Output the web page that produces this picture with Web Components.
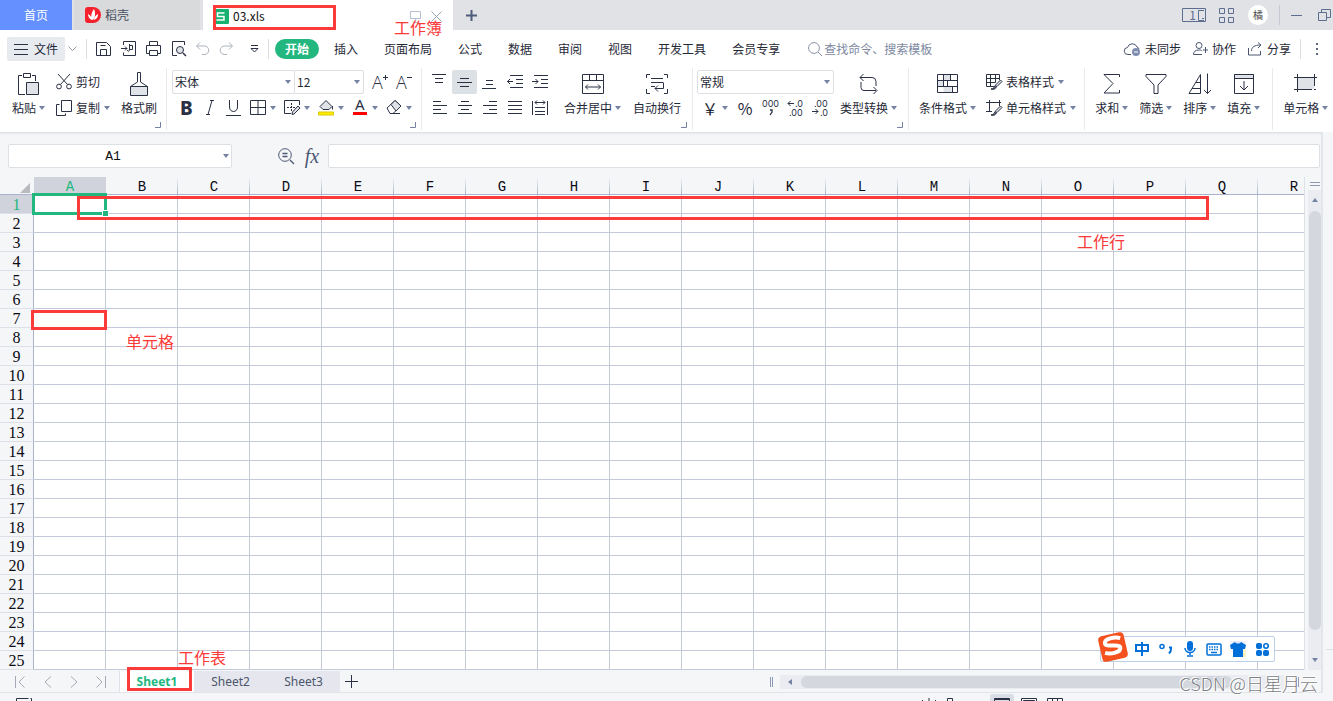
<!DOCTYPE html>
<html lang="zh-CN">
<head>
<meta charset="utf-8">
<title>03.xls</title>
<style>
html, body { margin: 0; height: 100%; }
body {
  font: 12px/18px "Noto Sans CJK SC", sans-serif;
  color: #1f2937;
  background: #f5f6f8;
  overflow: hidden;
  --line: #c5cadb;
  --edge: #a9b3cc;
  --green: #22b77f;
  --ink: #2a3144;
  --soft: #7583a3;
  --mark: #fb3a3a;
}
</style>
</head>
<body>
<wps-app></wps-app>
<script>
const ICONS = {
  docer: [16, 16, '<path d="M3 0h5a8 8 0 0 1 0 16H3a3 3 0 0 1-3-3V3a3 3 0 0 1 3-3z" fill="#f5222d" stroke="none"/><path d="M8 13C5 12 6 6 9 2c2 4 1 9-1 11zM7 13C4 12 3 9 3 7c2 1 4 3 4 6zM9 13c3-1 4-3 4-6-2 1-4 3-4 6z" fill="#fff" stroke="none"/>'],
  sheet: [14, 15, '<rect width="14" height="15" rx="1" fill="#17b26f" stroke="none"/><path d="M9.500 4H2.500v3.500H9V11H1.500" stroke="#fff" stroke-width="1.500"/>'],
  monitor: [12, 13, '<path d="M.5 1.500h10v7H.5zM5.500 9v3M3 12.500h5" stroke="#b7bfcf"/>'],
  close: [11, 11, '<path d="M.5.5l10 10M10.500.5l-10 10" stroke="#98a3b8"/>'],
  plusBold: [13, 13, '<path d="M6.500 1v11M1 6.500h11" stroke="#4f5b7a" stroke-width="2"/>'],
  reader: [25, 15, '<path d="M.5.5h23v13H.5zM22 2.500h-5.500v10H22" stroke="#5d6d90"/><path d="M20 10.500h2" stroke="#5d6d90"/>'],
  apps: [15, 15, '<path d="M.5.5h5v5h-5zM9.500.5h5v5h-5zM.5 9.500h5v5h-5zM9.500 9.500h5v5h-5z" stroke="#5d6d90"/>'],
  minimize: [11, 11, '<path d="M0 5.500h11" stroke="#5d6d90"/>'],
  restore: [13, 13, '<path d="M.5 3.500h8v8h-8zM3.500 3V.5h9v8H9" stroke="#5d6d90"/>'],
  menu: [14, 12, '<path d="M0 1.500h14M0 6.500h14M0 11.500h14"/>'],
  chevron: [9, 6, '<path d="M.5.5l4 4 4-4" stroke="#98a0ae"/>'],
  save: [16, 16, '<path d="M.5 14.500v-13h10l4 4v9H.5zM4.500 14.500v-6h6v6M4.500 4.500h5"/>'],
  exportPdf: [16, 16, '<path d="M2.500 4V.5h12v14h-12v-3M0 7.500h6M4 5.500l2 2-2 2M8.500 4.500h3v4H8M8.500 3v5c0 3-2 3-2 1"/>'],
  print: [16, 16, '<path d="M3.500 4V.5h8V4M3 12.500H.5v-8h14v8H12M3.500 9.500h8v5h-8z"/>'],
  preview: [16, 16, '<path d="M6 14.500H1.500V.5h12V4"/><circle cx="9" cy="9" r="3.500" fill="#dfe3e8"/><path d="M12 12l3 3" stroke-width="1.500"/>'],
  undo: [14, 14, '<path d="M4 .5L.5 4 4 7.500M1 4h7.500a4.200 4.200 0 0 1 0 8.500H6" stroke="#aab0ba"/>'],
  redo: [14, 14, '<path d="M10 .5L13.500 4 10 7.500M13 4H5.500a4.200 4.200 0 0 0 0 8.500H8" stroke="#aab0ba"/>'],
  more: [9, 8, '<path d="M1 .5h7M1 3.500h7L4.500 7z"/>'],
  search: [15, 15, '<circle cx="6" cy="6" r="5.400" stroke="#8a95ad"/><path d="M10 10l4 4" stroke="#8a95ad"/>'],
  cloud: [17, 14, '<path d="M7 12.500H4a3.500 3.500 0 0 1-.5-7 5 5 0 0 1 9.500-.5 3 3 0 0 1 2 2" stroke="#4a5670"/><circle cx="12" cy="10" r="4" fill="#7f8eb0" stroke="none"/><path d="M10 10h4" stroke="#fff"/>'],
  people: [15, 14, '<circle cx="6" cy="3.500" r="3" stroke="#4a5670"/><path d="M9 12.500H.5c0-3 2-4.500 5.500-4.500 2 0 3 .5 3 1M12.500 5v6M10 8h5" stroke="#4a5670"/>'],
  share: [15, 14, '<path d="M.5 6v7h12V9M3.500 9c0-4 3-6 9-6M10 .5L13 3l-3 3" stroke="#4a5670"/>'],
  paste: [22, 23, '<path d="M7 21.500H.5v-19H4M14 2.500h3.500V8M5.500.5h7v4h-7z"/><path d="M8.500 9.500h12v12h-12z" fill="#dfe3e8"/>'],
  cut: [16, 16, '<circle cx="3" cy="12.500" r="2.400"/><circle cx="13" cy="12.500" r="2.400"/><path d="M2 0l9.500 10.500M14 0L4.500 10.500"/>'],
  copy: [16, 16, '<path d="M5.500.5h10v11h-10zM3.500 4.500h-3v11h9v-2"/>'],
  brush: [20, 24, '<path d="M8.500 10V.5h3V10l7 4.500H1.500z"/><path d="M1.500 14.500h17v9h-17z" fill="#dfe3e8"/>'],
  bold: [16, 18, '<text x="2" y="16" font-family="Noto Sans, sans-serif" font-size="19" font-weight="800">B</text>'],
  italic: [16, 16, '<path d="M8 .5h4M4 14.500h4M10 .5l-4 14"/>'],
  underline: [16, 16, '<path d="M3.500 0v7c0 6 8 6 8 0V0M0 15.500h15"/>'],
  borders: [16, 16, '<path d="M.5.5h15v14H.5zM8 .5v14M.5 7.500h15"/>'],
  drawBorder: [16, 16, '<path d="M7 13.500H.5V.5h15V5"/><path d="M7.500 3v9M3 7.500h9" stroke-dasharray="2 1"/><path d="M14 6l2 2-6 6-2 .5.5-2.500z" fill="#dfe3e8"/>'],
  fill: [16, 16, '<path d="M2 6.500l6-6 6 6-3 3H5z" fill="#dfe3e8"/><path d="M14.500 6v3.500"/><path d="M.5 12h15v3H.5z" fill="#ffee00" stroke="#d7c800"/>'],
  fontColor: [16, 16, '<text x="3" y="10" font-family="Noto Sans, sans-serif" font-size="15">A</text><path d="M1 12h14v3H1z" fill="#ff0000" stroke="none"/>'],
  eraser: [16, 16, '<path d="M1 8l8-7.500L15 6l-8 7.500H4z"/><path d="M5 4.500L9 .5 15 6l-5 5z" fill="#dfe3e8"/><path d="M7 13.500h7"/>'],
  grow: [16, 17, '<text x="0" y="15" font-family="Open Sans, sans-serif" font-size="18" font-weight="300">A</text><path d="M13.500 1v5M11 3.500h5"/>'],
  shrink: [16, 17, '<text x="0" y="15" font-family="Open Sans, sans-serif" font-size="18" font-weight="300">A</text><path d="M11 3.500h5"/>'],
  top: [15, 16, '<path d="M0 .5h14M3 4.500h8M3 8.500h8"/>'],
  middle: [15, 16, '<path d="M3 4.500h9M0 8.500h15M3 12.500h9"/>'],
  bottom: [15, 16, '<path d="M4 6.500h7M4 10.500h7M0 14.500h14"/>'],
  outdent: [16, 16, '<path d="M3 1.500h13M9 5.500h7M9 9.500h7M3 13.500h13M0 7.500h6M3 5L.5 7.500 3 10"/>'],
  indent: [16, 16, '<path d="M2 1.500h14M9 5.500h7M9 9.500h7M2 13.500h14M0 7.500h6M3.500 5L6 7.500 3.500 10"/>'],
  left: [14, 14, '<path d="M0 .5h8M0 4.500h14M0 8.500h8M0 12.500h14"/>'],
  center: [14, 14, '<path d="M3 .5h8M0 4.500h14M3 8.500h8M0 12.500h14"/>'],
  right: [14, 14, '<path d="M6 .5h8M0 4.500h14M6 8.500h8M0 12.500h14"/>'],
  justify: [14, 14, '<path d="M0 .5h14M0 4.500h14M0 8.500h14M0 12.500h14"/>'],
  spread: [16, 16, '<path d="M.5 1v14M15.500 1v14M3 2.500h10M5 .5l-2 2 2 2M11 .5l2 2-2 2M3 7.500h10M3 11.500h10M3 14.500h10"/>'],
  merge: [22, 20, '<path d="M.5.5h21v19H.5zM.5 6.500h21M7.500.5v6M14.500.5v6M3.500 13h15M6 10.500L3.500 13 6 15.500M16 10.500l2.500 2.500-2.500 2.500"/>'],
  wrap: [22, 20, '<path d="M4 .5H.5V4M18 .5h3.500V4M.5 15v4.500H4M21.500 15v4.500H18M5 4.500h12M5 8.500h12M5 12.500h4M17.500 8.500v6H9M12 11.500l-3 3 3 3"/>'],
  comma: [16, 16, '<text x="0" y="7" font-family="Inter, sans-serif" font-size="9">000</text><path d="M8 10h2v2l-2 3" fill="none" stroke-width="1.300"/>'],
  decAdd: [16, 16, '<path d="M1 3.500h6M3.500 1L1 3.500 3.500 6"/><text x="8" y="7" font-family="Inter, sans-serif" font-size="9">.0</text><text x="2" y="16" font-family="Inter, sans-serif" font-size="9">.00</text>'],
  decSub: [16, 16, '<path d="M0 11.500h6M3.500 9L6 11.500 3.500 14"/><text x="2" y="7" font-family="Inter, sans-serif" font-size="9">.00</text><text x="8" y="16" font-family="Inter, sans-serif" font-size="9">.0</text>'],
  convert: [20, 21, '<path d="M4.500 0L1 3.500 4.500 7M1 3.500h12a4 4 0 0 1 4 4V12M2 8v5.500a3 3 0 0 0 3 3h12M14.500 13l3.500 3.500-3.500 3.500"/>'],
  condition: [22, 20, '<path d="M6.500.5h7v6h-7zM.5 6.500h6v6h-6zM6.500 12.500h8v6h-8z" fill="#dfe3e8" stroke="none"/><path d="M.5.5h20v18H.5zM.5 6.500h20M.5 12.500h20M6.500.5v12M13.500.5v6M10.500 6.500v6M15.500 12.500v6"/>'],
  tableStyle: [16, 17, '<path d="M8 12.500H.5V.5h13V6M.5 4.500h13M.5 8.500h9M4.500.5v12M9.500.5v8"/><path d="M14.500 6l1.500 1.500-5 5-2-1z" fill="#dfe3e8"/><path d="M9 12c-1 2-2 2.500-4 3 2 1 5 0 5.500-2.500" fill="#59627a"/>'],
  cellStyle: [16, 17, '<path d="M3.500 0v12M0 2.500h15M0 11.500h6M13.500 0v6"/><path d="M14.500 6l1.500 1.500-5 5-2-1z" fill="#dfe3e8"/><path d="M9 12c-1 2-2 2.500-4 3 2 1 5 0 5.500-2.500" fill="#59627a"/>'],
  sum: [18, 22, '<path d="M16.500 4V1.500H1l9 9-9 9.500h15.500V17"/>'],
  filter: [22, 22, '<path d="M1 1.500h20v2l-8 8.500v8.500H9V12L1 3.500z"/>'],
  sort: [24, 22, '<path d="M1 20.500L12.500 1.500v19zM8 9.500h4M4 15.500h8M19.500.5v20M16 17l3.500 3.500L23 17"/>'],
  fillDown: [22, 22, '<path d="M1.500 1.500h19v4h-19z" fill="#dfe3e8"/><path d="M1.500 1.500h19v19h-19zM11 8v9M7 13l4 4 4-4"/>'],
  cell: [24, 20, '<path d="M4 4h16v11H4z" fill="#dfe3e8" stroke="none"/><path d="M3.500 0v18M20.500 0v12M0 3.500h23M0 15.500h18M20 15.500h2"/>'],
  zoomOut: [17, 17, '<circle cx="7" cy="7" r="6.300" stroke="#4b5873"/><path d="M12 12l4 4M4.500 5.500h5M4.500 8.500h5" stroke="#4b5873" stroke-width="1.300"/>'],
  first: [11, 12, '<path d="M.5 0v12M9.500.5L4 6l5.500 5.500" stroke="#a4a9b3"/>'],
  prev: [8, 12, '<path d="M7 .5L1 6l6 5.500" stroke="#a4a9b3"/>'],
  next: [8, 12, '<path d="M1 .5L7 6l-6 5.500" stroke="#a4a9b3"/>'],
  last: [11, 12, '<path d="M9.500 0v12M.5.5L6 6 .5 11.500" stroke="#a4a9b3"/>'],
  plus: [13, 13, '<path d="M6.500 0v13M0 6.500h13"/>'],
  arrow: [6, 4, '<path d="M0 0h6L3 4z" fill="#7583a3" stroke="none"/>'],
  up: [6, 4, '<path d="M0 4h6L3 0z" fill="#7583a3" stroke="none"/>'],
  leftArrow: [4, 6, '<path d="M4 0v6L0 3z" fill="#7583a3" stroke="none"/>'],
  rightArrow: [4, 6, '<path d="M0 0v6l4-3z" fill="#7583a3" stroke="none"/>'],
  launcher: [6, 6, '<path d="M5.500 0v5.500H0" stroke="#7583a3"/>'],
  sogou: [34, 34, '<g transform="rotate(-13 17 17)"><rect x="4" y="4" width="26" height="26" rx="4" fill="#f4511e" stroke="none"/><path d="M26 10c-5-3-16-3-16 2 0 4 14 3 14 7 0 5-11 5-16 2" stroke="#fff" stroke-width="4"/></g>'],
  zh: [16, 16, '<path d="M2 4h12v6H2zM8 1v14" stroke="#0070d8" stroke-width="2"/>'],
  punct: [16, 16, '<circle cx="4" cy="5.500" r="2" stroke="#0070d8" stroke-width="1.500"/><path d="M11 6.500h2v2c0 2-1 3-2 4" stroke="#0070d8" stroke-width="2"/>'],
  mic: [16, 16, '<rect x="5" y="0" width="6" height="10" rx="3" fill="#0070d8" stroke="none"/><path d="M3 7c0 6 10 6 10 0M8 11v3M5 15h6" stroke="#0070d8" stroke-width="1.500"/>'],
  keyboard: [16, 16, '<rect x="1" y="3" width="14" height="11" rx="1" stroke="#0070d8" stroke-width="1.500"/><path d="M3 6h10M3 8.500h10" stroke="#0070d8" stroke-width="1.500" stroke-dasharray="1.500 1"/><path d="M5 11.500h6" stroke="#0070d8" stroke-width="1.500"/>'],
  skin: [16, 16, '<path d="M5 1c1 2 5 2 6 0l5 3-1 4h-2v8H3V8H1L0 4z" fill="#0070d8" stroke="none"/>'],
  tools: [16, 16, '<g fill="#0070d8" stroke="none"><rect x="2" y="2" width="6" height="6" rx="2"/><rect x="2" y="9" width="6" height="6" rx="2"/><rect x="9" y="9" width="6" height="6" rx="2"/></g><circle cx="12" cy="5" r="2.200" stroke="#0070d8" stroke-width="1.600"/>'],
  record: [16, 12, '<path d="M.5 12V.5h12M14.500.5h1v3" />'],
  eye: [16, 12, '<path d="M8 0v3M1 2l2 2M15 2l-2 2M0 8c5-5 11-5 16 0"/>'],
  lock: [6, 12, '<path d="M.5 12V.5h5V12"/>'],
  viewNormal: [16, 12, '<path d="M.5.5h15v11H.5zM0 1.500h16"/>'],
  viewPage: [16, 12, '<path d="M.5.5h15v11H.5zM2.500 2.500h11v9h-11z"/>'],
  viewBreak: [16, 12, '<path d="M.5.5h15v11H.5zM5.500.5v11M10.500.5v11"/>']
};

const BASE = `
:host { box-sizing: border-box; }
:host([hidden]) { display: none; }
*, *::before, *::after { box-sizing: border-box; }
button, input, select { font: inherit; color: inherit; margin: 0; padding: 0; border: 0; background: none; border-radius: 0; outline: 0; }
button { display: flex; align-items: center; justify-content: center; white-space: nowrap; }
a { color: inherit; text-decoration: none; }
`;

function element(name, css, html) {
  customElements.define(name, class extends HTMLElement {
    constructor() {
      super();
      const root = this.attachShadow({ mode: "open" });
      root.innerHTML = `<style>${BASE}${css}</style>${typeof html === "function" ? html(this) : html}`;
    }
  });
}

customElements.define("wps-icon", class extends HTMLElement {
  static observedAttributes = ["name"];
  constructor() {
    super();
    this.attachShadow({ mode: "open" });
  }
  attributeChangedCallback() {
    const [w, h, art] = ICONS[this.getAttribute("name")];
    this.shadowRoot.innerHTML = `<style>:host{display:block;flex:none}svg{display:block;overflow:visible;fill:none;stroke:var(--ink)}text{fill:var(--ink);stroke:none}</style>
      <svg width="${w}" height="${h}" viewBox="0 0 ${w} ${h}" aria-hidden="true">${art}</svg>`;
  }
});

const icon = name => `<wps-icon name="${name}"></wps-icon>`;

/* Command with a large icon over its caption. */
element("wps-big-command", `
:host { display: block; flex: none; }
button { flex-direction: column; height: 48px; }
.art { display: flex; align-items: center; justify-content: center; height: 28px; }
.label { display: flex; align-items: center; gap: 3px; height: 20px; }
:host([plain]) .label wps-icon { display: none; }`,
`<button type="button"><span class="art"><slot name="icon"></slot></span><span class="label"><slot></slot>${icon("arrow")}</span></button>`);

/* Small command: icon, optional caption, optional menu arrow. */
element("wps-command", `
:host { display: block; flex: none; }
button { height: 24px; gap: 4px; min-width: 16px; }
.art { display: flex; justify-content: center; min-width: 16px; }
:host([cell]) button { width: 25px; }
:host([active]) button { background: #dce1e6; border-radius: 2px; }
.arrow { display: none; }
:host([menu]) .arrow { display: block; }`,
`<button type="button"><span class="art"><slot name="icon"></slot></span><slot></slot><wps-icon class="arrow" name="arrow"></wps-icon></button>`);

/* Bordered drop-down list. */
element("wps-select", `
:host { display: block; position: relative; height: 24px; }
select { appearance: none; width: 100%; height: 24px; padding: 0 16px 0 2px; border: 1px solid #dcdfe4; border-radius: 2px; background: #fff; }
wps-icon { position: absolute; right: 4px; top: 10px; pointer-events: none; }`,
el => `<select aria-label="${el.getAttribute("label")}"><option>${el.getAttribute("value")}</option></select>${icon("arrow")}`);

element("wps-group", `
:host { display: flex; position: relative; flex: none; gap: 12px; height: 62px; padding: 2px 11px 0 10px; border-right: 1px solid #e8eaee; }
.launch { position: absolute; right: 5px; bottom: 2px; display: none; }
:host([launcher]) .launch { display: block; }
:host([last]) { border-right: 0; padding-right: 0; }`,
`<slot></slot><button class="launch" type="button" aria-label="更多设置">${icon("launcher")}</button>`);

element("wps-title-bar", `
:host { display: flex; flex: none; height: 30px; background: #e1e2e6; }
button.tab { height: 30px; }
.home { width: 72px; background: #6590ff; color: #fff; }
.docer { width: 126px; margin: 0 3px 0 2px; justify-content: flex-start; padding-left: 11px; gap: 4px; background: #d9dadc; color: #4a5060; }
.file { display: flex; align-items: center; width: 250px; padding: 2px 11px 0 12px; background: #fff; color: #111; }
.file span { flex: 1; margin-left: 4px; }
.file button + button { margin-left: 9px; }
.add { width: 36px; }
.tools { display: flex; align-items: center; margin-left: auto; padding-right: 2px; }
.reader { position: relative; margin-right: 12px; }
.reader span { position: absolute; left: 0; width: 18px; text-align: right; padding-right: 4px; line-height: 14px; color: #5d6d90; }
.avatar { width: 20px; height: 20px; margin: 0 11px 0 14px; border-radius: 50%; background: #fff; font-size: 10px; color: #444; }
.rule { width: 1px; height: 20px; background: #c6c9d2; margin-right: 11px; }
.min { margin-right: 16px; }`,
`<button type="button" class="tab home">首页</button>
<button type="button" class="tab docer">${icon("docer")}稻壳</button>
<div class="file">${icon("sheet")}<span>03.xls</span><button type="button" aria-label="放映">${icon("monitor")}</button><button type="button" aria-label="关闭">${icon("close")}</button></div>
<button type="button" class="add" aria-label="新建">${icon("plusBold")}</button>
<div class="tools">
<button type="button" class="reader">${icon("reader")}<span>1</span></button>
<button type="button" aria-label="应用">${icon("apps")}</button>
<button type="button" class="avatar">橘</button><i class="rule"></i>
<button type="button" class="min" aria-label="最小化">${icon("minimize")}</button>
<button type="button" aria-label="还原">${icon("restore")}</button></div>`);

element("wps-menu-bar", `
:host { display: flex; flex: none; align-items: center; height: 38px; padding-left: 7px; background: #fff; }
.file { width: 58px; height: 24px; gap: 6px; background: #e7ebf0; border-radius: 2px; }
.drop { width: 15px; }
.rule { width: 1px; height: 20px; background: #dcdee4; flex: none; }
.quick { display: flex; align-items: center; gap: 9px; padding: 0 9px; }
.quick .more { margin-left: 8px; }
nav { display: flex; align-items: center; gap: 26px; padding-left: 6px; }
nav a { white-space: nowrap; }
nav .on { padding: 1px 10px; margin-right: -11px; border-radius: 10px; background: var(--green); color: #fff; font-weight: bold; }
label { display: flex; align-items: center; gap: 1px; margin-left: 28px; }
input { width: 120px; height: 20px; padding-bottom: 2px; }
input::placeholder { color: #7d88a0; opacity: 1; }
.share { display: flex; align-items: center; gap: 12px; margin-left: auto; }
.share button { gap: 4px; }
.dots { width: 32px; }
.dots i { width: 2px; height: 2px; background: #5d6880; box-shadow: 0 -5px #5d6880, 0 5px #5d6880; }`,
`<button type="button" class="file">${icon("menu")}文件</button><button type="button" class="drop" aria-label="文件菜单">${icon("chevron")}</button>
<i class="rule" style="margin-left:6px"></i>
<div class="quick">${["save 保存", "exportPdf 输出", "print 打印", "preview 预览", "undo 撤销", "redo 恢复"].map(s => { const [n, t] = s.split(" "); return `<button type="button" aria-label="${t}">${icon(n)}</button>`; }).join("")}<button type="button" class="more" aria-label="更多">${icon("more")}</button></div>
<i class="rule"></i>
<nav><a href="#" class="on">开始</a>${["插入", "页面布局", "公式", "数据", "审阅", "视图", "开发工具", "会员专享"].map(t => `<a href="#">${t}</a>`).join("")}</nav>
<label>${icon("search")}<input type="search" aria-label="查找" placeholder="查找命令、搜索模板"></label>
<div class="share"><button type="button">${icon("cloud")}未同步</button><button type="button">${icon("people")}协作</button><button type="button">${icon("share")}分享</button></div>
<i class="rule" style="margin-left:9px"></i><button type="button" class="dots" aria-label="更多"><i></i></button>`);

const big = (name, text, extra = "") => `<wps-big-command ${extra}><wps-icon slot="icon" name="${name}"></wps-icon>${text}</wps-big-command>`;
const cmd = (name, text = "", extra = "") => `<wps-command ${extra}><wps-icon slot="icon" name="${name}"></wps-icon>${text}</wps-command>`;

element("wps-ribbon", `
:host { display: flex; flex: none; height: 64px; overflow: hidden; background: #fff; }
.col { display: flex; flex-direction: column; gap: 2px; }
.row { display: flex; gap: 8px; }
.grid { display: grid; grid-template-columns: repeat(5, 25px); row-gap: 2px; align-content: start; }
.fonts wps-select:first-child { width: 123px; }
.fonts wps-select + wps-select { width: 70px; margin-left: -9px; }
.style { padding-left: 6px; }
.number { gap: 9px; padding-left: 5px; }
.yen { width: 16px; font-size: 16px; text-align: center; }`,
`<wps-group launcher style="padding:2px 9px 0 12px;gap:11px">
${big("paste", "粘贴")}
<div class="col">${cmd("cut", "剪切")}${cmd("copy", "复制", "menu")}</div>
${big("brush", "格式刷", "plain")}
</wps-group>
<wps-group launcher style="padding-left:5px;padding-right:9px">
<div class="col"><div class="row fonts"><wps-select label="字体" value="宋体"></wps-select><wps-select label="字号" value="12"></wps-select>${cmd("grow")}${cmd("shrink")}</div>
<div class="row style">${cmd("bold")}${cmd("italic")}${cmd("underline")}${cmd("borders", "", "menu")}${cmd("drawBorder", "", "menu")}${cmd("fill", "", "menu")}${cmd("fontColor", "", "menu")}${cmd("eraser", "", "menu")}</div></div>
</wps-group>
<wps-group launcher style="padding-left:5px">
<div class="grid">${cmd("top", "", "cell")}${cmd("middle", "", "cell active")}${["bottom", "outdent", "indent", "left", "center", "right", "justify", "spread"].map(n => cmd(n, "", "cell")).join("")}</div>
${big("merge", "合并居中")}${big("wrap", "自动换行", "plain")}
</wps-group>
<wps-group launcher style="padding-left:4px;gap:6px">
<div class="col"><wps-select label="数字格式" value="常规" style="width:137px"></wps-select>
<div class="row number"><wps-command menu><span slot="icon" class="yen">￥</span></wps-command><wps-command><span slot="icon" class="yen">%</span></wps-command>${cmd("comma")}${cmd("decAdd")}${cmd("decSub")}</div></div>
${big("convert", "类型转换")}
</wps-group>
<wps-group style="gap:10px;padding-right:8px">
${big("condition", "条件格式")}
<div class="col">${cmd("tableStyle", "表格样式", "menu")}${cmd("cellStyle", "单元格样式", "menu")}</div>
</wps-group>
<wps-group style="gap:11px;padding-right:12px">${big("sum", "求和")}${big("filter", "筛选")}${big("sort", "排序")}${big("fillDown", "填充")}</wps-group>
<wps-group last>${big("cell", "单元格")}</wps-group>`);

element("wps-formula-bar", `
:host { display: flex; align-items: center; height: 45px; padding: 3px 1px 0 8px; box-shadow: inset 0 3px 3px -2px #d5d7dc; }
.name { position: relative; width: 224px; height: 24px; }
input { width: 100%; height: 24px; border: 1px solid #dcdfe4; border-radius: 2px; background: #fff; }
.name input { text-align: center; padding-right: 14px; font: 13px "Liberation Mono", monospace; color: #111; }
.name button { position: absolute; right: 2px; top: 2px; width: 8px; height: 20px; }
.find { margin-left: 46px; }
.fx { width: 16px; margin: 0 8px 0 9px; font: italic 20px/20px "Liberation Serif", serif; color: #4b5873; }
.value { flex: 1; }`,
`<div class="name"><input aria-label="名称框" value="A1"><button type="button" aria-label="名称列表">${icon("arrow")}</button></div>
<button type="button" class="find" aria-label="搜索">${icon("zoomOut")}</button>
<button type="button" class="fx">fx</button>
<input class="value" aria-label="编辑栏">`);

const COLUMNS = [..."ABCDEFGHIJKLMNOPQR"];
element("wps-grid", `
:host { display: flex; }
.view { flex: 1; min-width: 0; overflow: hidden; position: relative; }
table { border-collapse: separate; border-spacing: 0; table-layout: fixed; width: 1330px; color: #0b0b14; }
th { font-weight: normal; padding: 0; text-align: center; }
thead th { height: 18px; font: 14px/14px "Liberation Mono", monospace; padding-top: 3px; border-bottom: 1px solid var(--edge); background: linear-gradient(#f5f6f8, var(--edge)) right / 1px 100% no-repeat; }
thead th:first-child { width: 34px; background: none; }
thead th:first-child::after { content: ""; display: block; margin: 2px 0 0 20px; border: 5px solid transparent; border-right-color: #b8babf; border-bottom-color: #b8babf; width: 10px; height: 10px; }
thead th.on { background: #d0d3dc; color: var(--green); }
tbody th { height: 19px; padding-top: 2px; font: 16px/16px "Liberation Serif", serif; border-right: 1px solid var(--edge); border-bottom: 1px solid #dde0e8; }
tbody th.on { background: #d0d3dc; color: var(--green); }
td { height: 19px; padding: 0; background: #fff; border-right: 1px solid var(--line); border-bottom: 1px solid var(--line); }
td.cur { position: relative; }
td.cur::before { content: ""; position: absolute; inset: -2px; border: 3px solid var(--green); z-index: 1; }
td.cur::after { content: ""; position: absolute; right: -4px; bottom: -4px; width: 7px; height: 7px; background: var(--green); border: 1px solid #fff; z-index: 2; }
.scroll { display: flex; flex-direction: column; align-items: center; width: 17px; padding-left: 3px; border-left: 1px solid #dfe1e9; }
.split { width: 10px; height: 4px; margin: 5px 0 4px; border: solid #8c9ab5; border-width: 1px 0; }
.track { display: flex; flex-direction: column; align-items: center; width: 14px; flex: 1; padding: 8px 0; background: #ebecf1; }
.thumb { flex: 1; width: 12px; margin: 9px 0 28px; border-radius: 6px; background: #d5d7df; }`,
`<div class="view"><table><thead><tr><th></th>${COLUMNS.map((c, i) => `<th scope="col"${i ? "" : ' class="on"'}>${c}</th>`).join("")}</tr></thead>
<tbody>${Array.from({ length: 25 }, (_, r) => `<tr><th scope="row"${r ? "" : ' class="on"'}>${r + 1}</th>${COLUMNS.map((c, i) => r || i ? "<td></td>" : '<td class="cur"></td>').join("")}</tr>`).join("")}</tbody></table></div>
<div class="scroll"><i class="split"></i><div class="track">${icon("up")}<i class="thumb"></i>${icon("arrow")}</div></div>`);

element("wps-sheet-tabs", `
:host { display: flex; align-items: stretch; height: 23px; padding-top: 1px; border-bottom: 1px solid #e1e3e9; font-family: "Noto Sans", sans-serif; }
.nav { display: flex; align-items: center; gap: 18px; width: 120px; padding-left: 15px; border-right: 1px solid #dfe1e9; }
.tab { width: 73px; background: #e6e7ee; color: #4c566c; }
.tab.on { width: 74px; background: #fff; color: var(--green); font-weight: bold; }
.add { width: 23px; }
.bar { display: flex; align-items: center; flex: 0 1 551px; margin-left: auto; }
.grip { width: 3px; height: 10px; border: solid #8c9ab5; border-width: 0 1px; margin-right: 7px; }
.track { display: flex; align-items: center; flex: 1; height: 14px; padding: 0 8px; background: #ebecf1; }
.thumb { flex: 1; height: 12px; margin: 0 40px 0 9px; border-radius: 6px; background: #d5d7df; }
.bar .grip:last-child { margin: 0 22px 0 12px; }`,
`<div class="nav">${["first 首个", "prev 上一个", "next 下一个", "last 末个"].map(s => { const [n, t] = s.split(" "); return `<button type="button" aria-label="${t}">${icon(n)}</button>`; }).join("")}</div>
<button type="button" class="tab on">Sheet1</button><button type="button" class="tab">Sheet2</button><button type="button" class="tab">Sheet3</button>
<button type="button" class="add" aria-label="新建工作表">${icon("plus")}</button>
<div class="bar"><i class="grip"></i><div class="track">${icon("leftArrow")}<i class="thumb"></i>${icon("rightArrow")}</div><i class="grip"></i></div>`);

element("wps-status-bar", `
:host { display: flex; flex: none; height: 24px; padding: 5px 32px 0 16px; }
.views { display: flex; gap: 10px; margin-left: auto; margin-right: 238px; }
.on { height: 18px; margin: -4px -3px 0; padding: 4px 4px 0; background: #d9dde6; border-radius: 2px; }
.views .gap { width: 20px; }`,
`${icon("record")}<div class="views">${icon("eye")}${icon("lock")}<i class="gap"></i><span class="on">${icon("viewNormal")}</span>${icon("viewPage")}${icon("viewBreak")}</div>`);

/* Input method panel floating over the sheet. */
element("wps-ime", `
:host { display: flex; align-items: center; gap: 8px; height: 26px; padding: 0 4px 0 33px; background: #fff; border: 1px solid #bcd0ea; border-radius: 2px; }
.logo { position: absolute; left: -5px; top: -7px; }
.skin { background: radial-gradient(circle at 90% 90%, #fff1b8, transparent 60%), radial-gradient(circle at 50% 10%, #e2e4ff, transparent 80%); }`,
`<span class="logo">${icon("sogou")}</span>${["zh 中文", "punct 标点", "mic 语音", "keyboard 键盘", "skin 皮肤", "tools 工具"].map(s => { const [n, t] = s.split(" "); return `<button type="button" class="${n}" aria-label="${t}">${icon(n)}</button>`; }).join("")}`);

element("wps-mark", `
:host { display: block; position: absolute; z-index: 5; pointer-events: none; color: var(--mark); font-size: 16px; line-height: 20px; white-space: nowrap; }
:host([box]) { border: 3px solid var(--mark); }`, `<slot></slot>`);

element("wps-app", `
:host { display: flex; flex-direction: column; position: relative; height: 100vh; overflow: hidden; }
.body { display: flex; flex: none; }
.main { flex: 1; min-width: 0; }
.side { width: 12px; border-left: 2px solid #e3e5ec; }
.side i { display: block; height: 1px; margin: 517px 0 0 3px; background: #dfe1e9; }
wps-ime { position: absolute; left: 1100px; top: 636px; z-index: 4; }
.water { position: absolute; right: 15px; top: 671px; z-index: 6; font-size: 18px; line-height: 24px; font-weight: 300; color: #7d7f84; text-shadow: 1px 1px #fff, -1px -1px #fff; white-space: nowrap; }`,
`<wps-title-bar></wps-title-bar><wps-menu-bar></wps-menu-bar><wps-ribbon></wps-ribbon>
<div class="body"><div class="main"><wps-formula-bar></wps-formula-bar><wps-grid></wps-grid><wps-sheet-tabs></wps-sheet-tabs></div><aside class="side"><i></i></aside></div>
<wps-status-bar></wps-status-bar>
<wps-ime></wps-ime>
<wps-mark box style="left:213px;top:5px;width:123px;height:25px"></wps-mark>
<wps-mark box style="left:77px;top:196px;width:1132px;height:24px"></wps-mark>
<wps-mark box style="left:31px;top:310px;width:76px;height:20px"></wps-mark>
<wps-mark box style="left:127px;top:667px;width:65px;height:24px"></wps-mark>
<wps-mark style="left:394px;top:17px">工作簿</wps-mark>
<wps-mark style="left:1077px;top:231px">工作行</wps-mark>
<wps-mark style="left:126px;top:331px">单元格</wps-mark>
<wps-mark style="left:178px;top:647px">工作表</wps-mark>
<span class="water">CSDN @日星月云</span>`);
</script>
</body>
</html>
